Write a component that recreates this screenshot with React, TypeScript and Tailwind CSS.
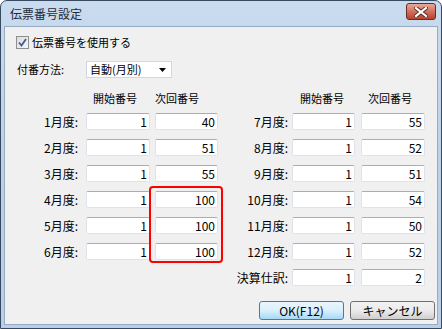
import React from 'react';

const leftRows = [
  { label: '1月度:', start: '1', next: '40' },
  { label: '2月度:', start: '1', next: '51' },
  { label: '3月度:', start: '1', next: '55' },
  { label: '4月度:', start: '1', next: '100' },
  { label: '5月度:', start: '1', next: '100' },
  { label: '6月度:', start: '1', next: '100' },
];

const rightRows = [
  { label: '7月度:', start: '1', next: '55' },
  { label: '8月度:', start: '1', next: '52' },
  { label: '9月度:', start: '1', next: '51' },
  { label: '10月度:', start: '1', next: '54' },
  { label: '11月度:', start: '1', next: '50' },
  { label: '12月度:', start: '1', next: '52' },
  { label: '決算仕訳:', start: '1', next: '2' },
];

// テキストボックス（右寄せの数値）
const Field = ({ value, w }: { value: string; w: string }) => (
  <div
    className={`${w} h-[17px] bg-white border border-[#dde3ea] border-t-[#abadb3] rounded-[2px] text-right pr-[2px] text-[12px] leading-[15px] text-black`}
  >
    {value}
  </div>
);

const App: React.FC = () => {
  return (
    <div className="w-[442px] h-[329px] font-['Noto_Sans_CJK_JP','Liberation_Sans',sans-serif] text-[11px] text-black">
      <div className="w-full h-full flex flex-col border border-[#384a60] rounded-t-[7px] bg-gradient-to-b from-[#c9dbee] via-[#bcd1e8] to-[#b9cfe7] px-[3px] pb-[3px]">
        {/* タイトルバー */}
        <div className="h-[25px] flex items-center justify-between pl-[6px] pr-[2px]">
          <span className="text-[12px] leading-none text-[#1e2a3a]">伝票番号設定</span>
          <div className="mb-[4px] w-[30px] h-[17px] rounded-[3px] border border-[#6b2a22] bg-gradient-to-b from-[#e8a999] via-[#d0715d] to-[#b8412c] flex items-center justify-center">
            <svg width="14" height="10" viewBox="0 0 14 10">
              <path d="M2 1 L12 9 M12 1 L2 9" stroke="#5a2a22" strokeWidth="4" strokeLinecap="square" />
              <path d="M2 1 L12 9 M12 1 L2 9" stroke="#ffffff" strokeWidth="2.2" strokeLinecap="square" />
            </svg>
          </div>
        </div>

        {/* クライアント領域 */}
        <div className="relative flex-1 flex flex-col bg-[#f0f0f0] border border-[#97abc4]">
          {/* チェックボックス */}
          <div className="mt-[9px] ml-[11px] h-[13px] flex items-center">
            <div className="w-[13px] h-[13px] border border-[#8e8f8f] bg-gradient-to-br from-[#dcdcdc] to-[#f6f6f6] flex items-center justify-center">
              <svg width="9" height="9" viewBox="0 0 9 9">
                <path d="M1 4.5 L3.5 7.5 L8 1" stroke="#3c5f9a" strokeWidth="1.8" fill="none" />
              </svg>
            </div>
            <span className="ml-[3px] leading-none">伝票番号を使用する</span>
          </div>

          {/* 付番方法 */}
          <div className="mt-[12px] ml-[12px] h-[17px] flex items-center">
            <span className="w-[69px] leading-none">付番方法:</span>
            <div className="w-[86px] h-[17px] bg-white border border-[#d3d7dd] flex items-center justify-between pl-[3px] pr-[5px]">
              <span className="leading-none">自動(月別)</span>
              <svg width="7" height="4" viewBox="0 0 7 4">
                <path d="M0 0 L7 0 L3.5 4 Z" fill="#000" />
              </svg>
            </div>
          </div>

          {/* 見出し */}
          <div className="mt-[13px] h-[14px] flex items-center leading-none whitespace-nowrap">
            <span className="ml-[88px] w-[62px]">開始番号</span>
            <span className="w-[145px]">次回番号</span>
            <span className="w-[68px]">開始番号</span>
            <span>次回番号</span>
          </div>

          {/* 番号 */}
          <div className="mt-[8px] flex">
            <div className="flex flex-col gap-[9px]">
              {leftRows.map((r) => (
                <div key={r.label} className="h-[17px] flex items-center">
                  <span className="w-[81px] pr-[8px] text-right text-[12px] leading-none">{r.label}</span>
                  <Field value={r.start} w="w-[64px]" />
                  <div className="w-[5px]" />
                  <Field value={r.next} w="w-[63px]" />
                </div>
              ))}
            </div>
            <div className="flex flex-col gap-[9px]">
              {rightRows.map((r) => (
                <div key={r.label} className="h-[17px] flex items-center">
                  <span className="w-[74px] pr-[4px] text-right text-[12px] leading-none">{r.label}</span>
                  <Field value={r.start} w="w-[63px]" />
                  <div className="w-[6px]" />
                  <Field value={r.next} w="w-[64px]" />
                </div>
              ))}
            </div>
          </div>

          {/* ボタン */}
          <div className="mt-[15px] pr-[2px] flex justify-end gap-[6px]">
            <button className="w-[85px] h-[19px] rounded-[3px] border border-[#3c7fb1] bg-gradient-to-b from-[#eaf6fd] via-[#d9f0fc] to-[#a7d9f5] text-[12px] leading-none">
              OK(F12)
            </button>
            <button className="w-[85px] h-[19px] rounded-[3px] border border-[#707070] bg-gradient-to-b from-[#f2f2f2] via-[#ebebeb] to-[#cfcfcf] text-[12px] leading-none">
              キャンセル
            </button>
          </div>

          {/* 強調枠 */}
          <div className="absolute left-[144px] top-[159px] w-[74px] h-[77px] border-2 border-[#ff0000] rounded-[4px]" />
        </div>
      </div>
    </div>
  );
};

export default App;
